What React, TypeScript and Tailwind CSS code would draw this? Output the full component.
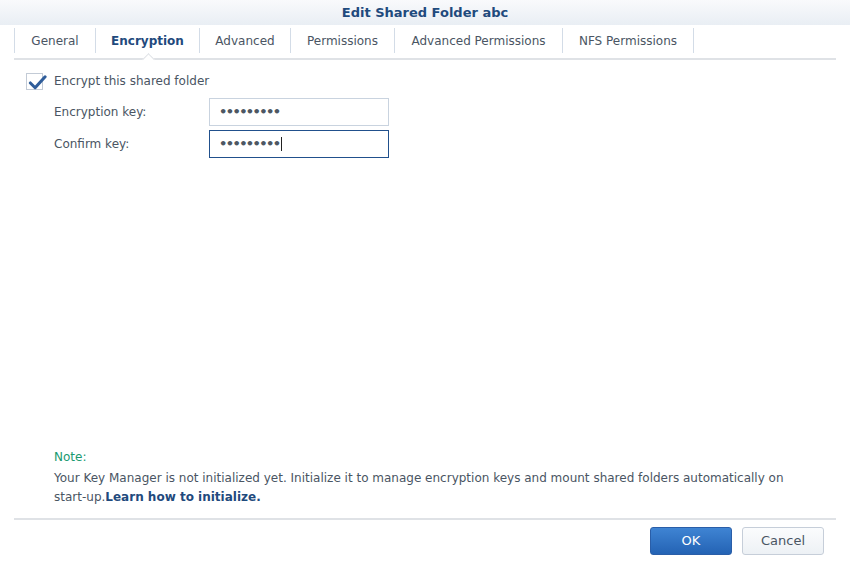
import React from 'react'

const tabs = [
  { label: 'General', w: 'w-[81px]' },
  { label: 'Encryption', w: 'w-[104px]', active: true },
  { label: 'Advanced', w: 'w-[91px]' },
  { label: 'Permissions', w: 'w-[104px]' },
  { label: 'Advanced Permissions', w: 'w-[168px]' },
  { label: 'NFS Permissions', w: 'w-[131px]' },
]

const Field = ({ label, focused }: { label: string; focused?: boolean }) => (
  <div className="flex flex-row items-center h-[28px]">
    <div className="w-[155px] text-[#4a5563]">{label}</div>
    <div
      className={
        focused
          ? 'w-[180px] h-[28px] border border-[#21508c] flex items-center px-[9px]'
          : 'w-[180px] h-[28px] border border-[#c9d3df] flex items-center px-[9px]'
      }
    >
      <span className="text-[#4d5763] tracking-[-1.6px] text-[13px] font-bold">•••••••••</span>
      {focused && <span className="w-px h-[14px] bg-[#222] ml-[2px]"></span>}
    </div>
  </div>
)

export default function App() {
  return (
    <div className="w-[850px] h-[563px] bg-white flex flex-col text-[12px] text-[#4a5563] font-['DejaVu_Sans',Verdana,sans-serif] overflow-hidden">
      <div className="h-[25px] flex items-center justify-center bg-gradient-to-b from-[#f9fafc] to-[#e9eef4] font-bold text-[13px] text-[#1f4a7d]">
        Edit Shared Folder abc
      </div>

      <div className="mx-[14px] relative border-b-2 border-[#dfe2e6] h-[35px] flex flex-row items-start pt-[3px]">
        <div className="flex flex-row h-[25px] border-l border-[#d3dce7]">
          {tabs.map((t) => (
            <div
              key={t.label}
              className={
                (t.active ? 'font-bold text-[#1f4a7d] ' : 'text-[#4a5563] ') +
                t.w +
                ' relative flex items-center justify-center border-r border-[#d3dce7] h-full'
              }
            >
              {t.label}
              {t.active && (
                <span className="absolute left-[48px] top-[27px] w-[9px] h-[9px] rotate-45 bg-white border-l border-t border-[#dfe2e6]"></span>
              )}
            </div>
          ))}
        </div>
      </div>

      <div className="flex-1 flex flex-col pl-[26px] pt-[12px]">
        <div className="flex flex-row items-center h-[18px]">
          <div className="w-[17px] h-[17px] border border-[#c3cbd6] relative">
            <svg viewBox="0 0 20 20" className="absolute left-[1px] top-[-1px] w-[19px] h-[19px]">
              <path d="M2.5 10.5 L7.5 15.5 L18 4" fill="none" stroke="#2f5d9a" strokeWidth="3.2" strokeLinecap="round" strokeLinejoin="round" />
            </svg>
          </div>
          <span className="ml-[11px]">Encrypt this shared folder</span>
        </div>
        <div className="flex flex-col gap-[4px] mt-[8px] pl-[28px]">
          <Field label="Encryption key:" />
          <Field label="Confirm key:" focused />
        </div>

        <div className="mt-auto pl-[28px] pb-[11px] leading-[19px]">
          <div className="text-[#1a9a70] mb-[2px]">Note:</div>
          <div className="pr-[40px]">
            Your Key Manager is not initialized yet. Initialize it to manage encryption keys and mount shared folders automatically on start-up.
            <span className="font-bold text-[#1f4a7d]">Learn how to initialize.</span>
          </div>
        </div>
      </div>

      <div className="mx-[14px] border-t-2 border-[#dfe2e6] h-[45px] flex flex-row justify-end items-center gap-[10px] pr-[12px] pb-[2px]">
        <button className="w-[82px] h-[28px] rounded-[3px] border border-[#2a5ea8] bg-gradient-to-b from-[#3f84d3] to-[#2463b4] text-white text-[13px]">
          OK
        </button>
        <button className="w-[82px] h-[28px] rounded-[3px] border border-[#c6ced9] bg-gradient-to-b from-[#fbfcfd] to-[#edf1f5] text-[#4a5563] text-[13px]">
          Cancel
        </button>
      </div>
    </div>
  )
}
